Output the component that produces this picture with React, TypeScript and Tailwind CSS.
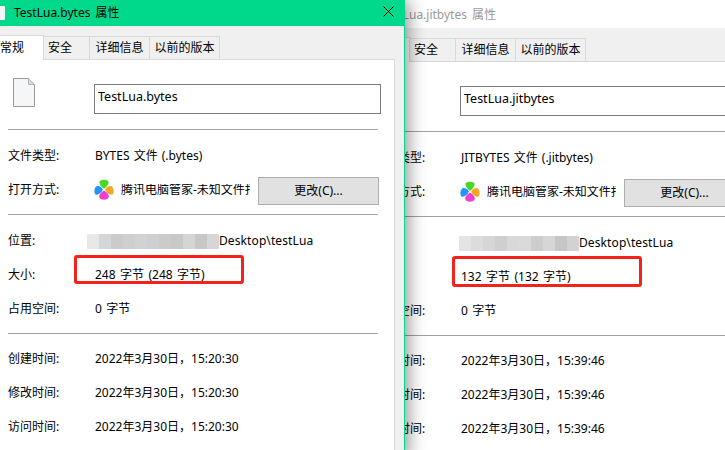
const FONT = 'font-["Noto_Sans","Noto_Sans_CJK_SC",sans-serif]'

type WindowProps = {
  name: string
  typeText: string
  sizeText: string
  time: string
  active?: boolean
  blur: string[]
  blurClass: string
  className: string
}

function Row({ label, children }: { label: string; children: React.ReactNode }) {
  return (
    <div className="flex h-[34px] items-center pt-[2px] pl-2">
      <span className="w-[87px] shrink-0">{label}</span>
      {children}
    </div>
  )
}

function FileIcon() {
  return (
    <svg width="22" height="29" viewBox="0 0 22 29" className="shrink-0">
      <path d="M.5.5H15.5L21.5 6.5V28.5H.5Z" fill="#f5f6f8" stroke="#9a9a9a" />
      <path d="M15.5.5V6.5H21.5Z" fill="#d9d9d9" stroke="#b5b5b5" />
    </svg>
  )
}

function ManagerLogo() {
  return (
    <svg width="20" height="22" viewBox="0 0 20 22" className="-ml-px shrink-0">
      <path d="M5.5 2.5C7 .2 13 .2 14.500 2.500C15 5.500 12 8.500 10 9.800C8 8.500 5 5.500 5.500 2.500Z" fill="#49d624" />
      <path d="M8.800 10.500C7.800 7.800 5 6.500 3 7C.3 8 -.5 13 1.500 15.500C4 16.500 7.800 13.500 8.800 10.500Z" fill="#2295f5" />
      <path d="M11.200 10.500C12.200 7.800 15 6.500 17 7C19.700 8 20.500 13 18.500 15.500C16 16.500 12.200 13.500 11.200 10.500Z" fill="#f5a623" />
      <path d="M10 11.500C12 12.800 15 15 14.800 18C14 21.500 6 21.500 5.200 18C5 15 8 12.800 10 11.500Z" fill="#ee3fce" />
    </svg>
  )
}

function PropertiesWindow({ name, typeText, sizeText, time, active, blur, blurClass, className }: WindowProps) {
  return (
    <div className={`absolute h-[460px] w-[405px] overflow-hidden bg-[#f0f0f0] ${active ? 'border-r border-[#00d98b]' : ''} ${className}`}>
      {/* Title bar */}
      <div className={`flex h-[26px] items-center pl-[14px] ${active ? 'bg-[#00d98b] text-black' : 'bg-white text-[#9a9a9a]'}`}>
        <span className="-ml-[25px] mr-[9px] h-[14px] w-[16px] rounded-[1px] bg-[#f4f6f8]" />
        <span className="grow [word-spacing:2px]">{name} 属性</span>
        <svg width="11" height="11" viewBox="0 0 11 11" className="mr-[10px] mb-[4px]">
          <path d="M.5.5L10.500 10.500M10.500.5L.5 10.500" stroke="#000" fill="none" />
        </svg>
      </div>

      {/* Tabs */}
      <div className="flex h-[33px] items-end">
        <div className="relative -mb-px flex h-[25px] w-[44px] items-center border-t border-r border-[#d9d9d9] bg-white pb-px">常规</div>
        <div className="flex h-[23px] w-[46px] items-center border-t border-r border-[#d9d9d9] pl-[4px]">安全</div>
        <div className="flex h-[23px] w-[60px] items-center justify-center border-t border-r border-[#d9d9d9]">详细信息</div>
        <div className="flex h-[23px] w-[70px] items-center justify-center border-t border-r border-[#d9d9d9]">以前的版本</div>
      </div>

      {/* General page */}
      <div className="h-[400px] w-[395px] border-t border-r border-[#d9d9d9] bg-white">
        <div className="flex items-start pt-[18px] pl-[13px]">
          <FileIcon />
          <div className="mt-[6px] ml-[59px] flex h-[30px] w-[287px] items-start border border-[#7a7a7a] pt-[6px] pl-[3px] text-[12.5px]">{name}</div>
        </div>
        <div className="mx-2 mt-[15px] mb-2 h-px w-[370px] bg-[#a0a0a0]" />
        <Row label="文件类型:">
          <span className="[word-spacing:1px]">{typeText}</span>
        </Row>
        <Row label="打开方式:">
          <ManagerLogo />
          <span className="ml-[7px] w-[129px] shrink-0 overflow-hidden whitespace-nowrap">腾讯电脑管家-未知文件打开器</span>
          <button className="mt-[2px] ml-2 h-[28px] w-[121px] shrink-0 border border-[#adadad] bg-[#e1e1e1]">更改(C)...</button>
        </Row>
        <div className="mx-2 mt-2 mb-2 h-px w-[370px] bg-[#a0a0a0]" />
        <Row label="位置:">
          <div className={`flex h-[15px] ${blurClass}`}>
            {blur.map((c, i) => (
              <span key={i} className="h-full w-[12px]" style={{ backgroundColor: c }} />
            ))}
          </div>
          <span className="tracking-[0.1px]">Desktop\testLua</span>
        </Row>
        <Row label="大小:">
          <span className="[word-spacing:1.3px]">{sizeText}</span>
        </Row>
        <Row label="占用空间:">
          <span className="[word-spacing:1.3px]">0 字节</span>
        </Row>
        <div className="mx-2 mt-2 mb-[7px] h-px w-[370px] bg-[#a0a0a0]" />
        <Row label="创建时间:">
          <span>{time}</span>
        </Row>
        <Row label="修改时间:">
          <span>{time}</span>
        </Row>
        <Row label="访问时间:">
          <span>{time}</span>
        </Row>
      </div>
    </div>
  )
}

export default function App() {
  return (
    <div className={`relative h-[450px] w-[725px] overflow-hidden bg-white text-[12px] leading-none text-black ${FONT}`}>
      <PropertiesWindow
        className="top-[2px] left-[366px]"
        name="TestLua.jitbytes"
        typeText="JITBYTES 文件 (.jitbytes)"
        sizeText="132 字节 (132 字节)"
        time="2022年3月30日，15:39:46"
        blurClass="-ml-[2px]"
        blur={['#e4e4e4', '#dcdcdc', '#d6d6d6', '#cfcfcf', '#d8d8d8', '#dadada', '#cdcdcd', '#d6d6d6', '#c6c6c6', '#d2d2d2']}
      />
      <PropertiesWindow
        active
        className="top-0 left-0 z-10 shadow-[4px_0_16px_rgba(0,0,0,0.4)]"
        name="TestLua.bytes"
        typeText="BYTES 文件 (.bytes)"
        sizeText="248 字节 (248 字节)"
        time="2022年3月30日，15:20:30"
        blurClass="-ml-2"
        blur={['#e8e8e8', '#d4d6d7', '#cbcbcb', '#cfcfcf', '#cfd3d5', '#cfcfd1', '#cdcaca', '#c8c8c8', '#d4d6d6', '#c9c6c8', '#d6d6d6']}
      />
      {/* Red annotation boxes */}
      <div className="absolute top-[255px] left-[74px] z-20 h-[29px] w-[170px] rounded-[3px] border-[3px] border-[#f5221b]" />
      <div className="absolute top-[256px] left-[452px] z-20 h-[31px] w-[190px] rounded-[3px] border-[3px] border-[#f5221b]" />
    </div>
  )
}
